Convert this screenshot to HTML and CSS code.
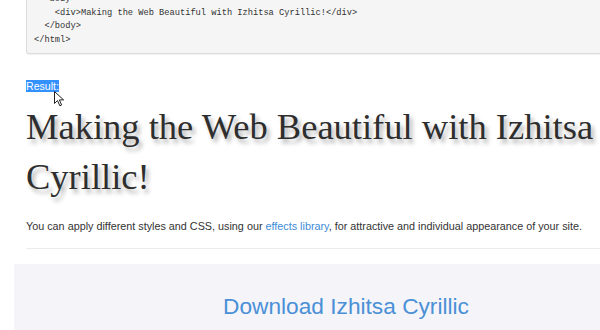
FILE: index.html
```html
<!DOCTYPE html>
<html lang="en">
<head>
  <meta charset="UTF-8">
  <title>Izhitsa Cyrillic</title>
  <link rel="stylesheet" href="styles.css">
</head>
<body>
  <div class="page">
    <pre class="code">  &lt;body&gt;
    &lt;div&gt;Making the Web Beautiful with Izhitsa Cyrillic!&lt;/div&gt;
  &lt;/body&gt;
&lt;/html&gt;</pre>

    <div class="result-label">
      <span class="selected">Result:</span>
      <svg class="cursor" width="11" height="16" viewBox="0 0 11 16">
        <path d="M0.5 0.5 L0.5 12.5 L3.5 9.5 L5.8 14.8 L7.6 14 L5.4 8.9 L9.6 8.9 Z" fill="#fff" stroke="#222" stroke-width="1" stroke-linejoin="round"/>
      </svg>
    </div>

    <h1 class="demo-title">Making the Web Beautiful with Izhitsa Cyrillic!</h1>

    <p class="lead">You can apply different styles and CSS, using our <a href="#">effects library</a>, for attractive and individual appearance of your site.</p>

    <hr class="divider">

    <div class="download">
      <a href="#">Download Izhitsa Cyrillic</a>
    </div>
  </div>
</body>
</html>
```

FILE: styles.css
```css
body {
  margin: 0;
  background: #fff;
  color: #333;
  font-family: "Liberation Sans", Arial, sans-serif;
  overflow: hidden;
}
.page {
  margin-left: 26px;
  width: 652px;
}
.code {
  margin: -16px 0 0 0;
  padding: 8px 7px 6px;
  background-color: #f5f5f5;
  border: 1px solid #dcdcdc;
  border-radius: 3px;
  box-shadow: 0 1px 1px rgba(0,0,0,0.06);
  font-family: "Liberation Mono", monospace;
  font-size: 8.7px;
  line-height: 13.5px;
  color: #333;
}
.result-label {
  position: relative;
  margin-top: 26px;
  height: 13px;
  font-size: 10.6px;
  line-height: 13px;
}
.selected {
  background-color: #3390ff;
  color: #fff;
}
.cursor {
  position: absolute;
  left: 28px;
  top: 11px;
}
.demo-title {
  margin: 9px 0 0;
  font-family: "Liberation Serif", "Times New Roman", serif;
  font-weight: normal;
  font-size: 36.5px;
  line-height: 50px;
  color: #2e2e2e;
  text-shadow: 3px 4px 4px rgba(0,0,0,0.3);
}
.lead {
  margin: 16px 0 0;
  font-size: 10.8px;
  line-height: 16px;
}
a {
  color: #3d8bd6;
  text-decoration: none;
}
.divider {
  margin: 14px 0 0;
  border: 0;
  border-top: 1px solid #ececec;
}
.download {
  margin: 15px 0 0 -12px;
  padding: 29px 0 20px;
  background-color: #f5f4f9;
  text-align: center;
  font-size: 22.7px;
}
.download a {
  color: #4a90d6;
}
```
